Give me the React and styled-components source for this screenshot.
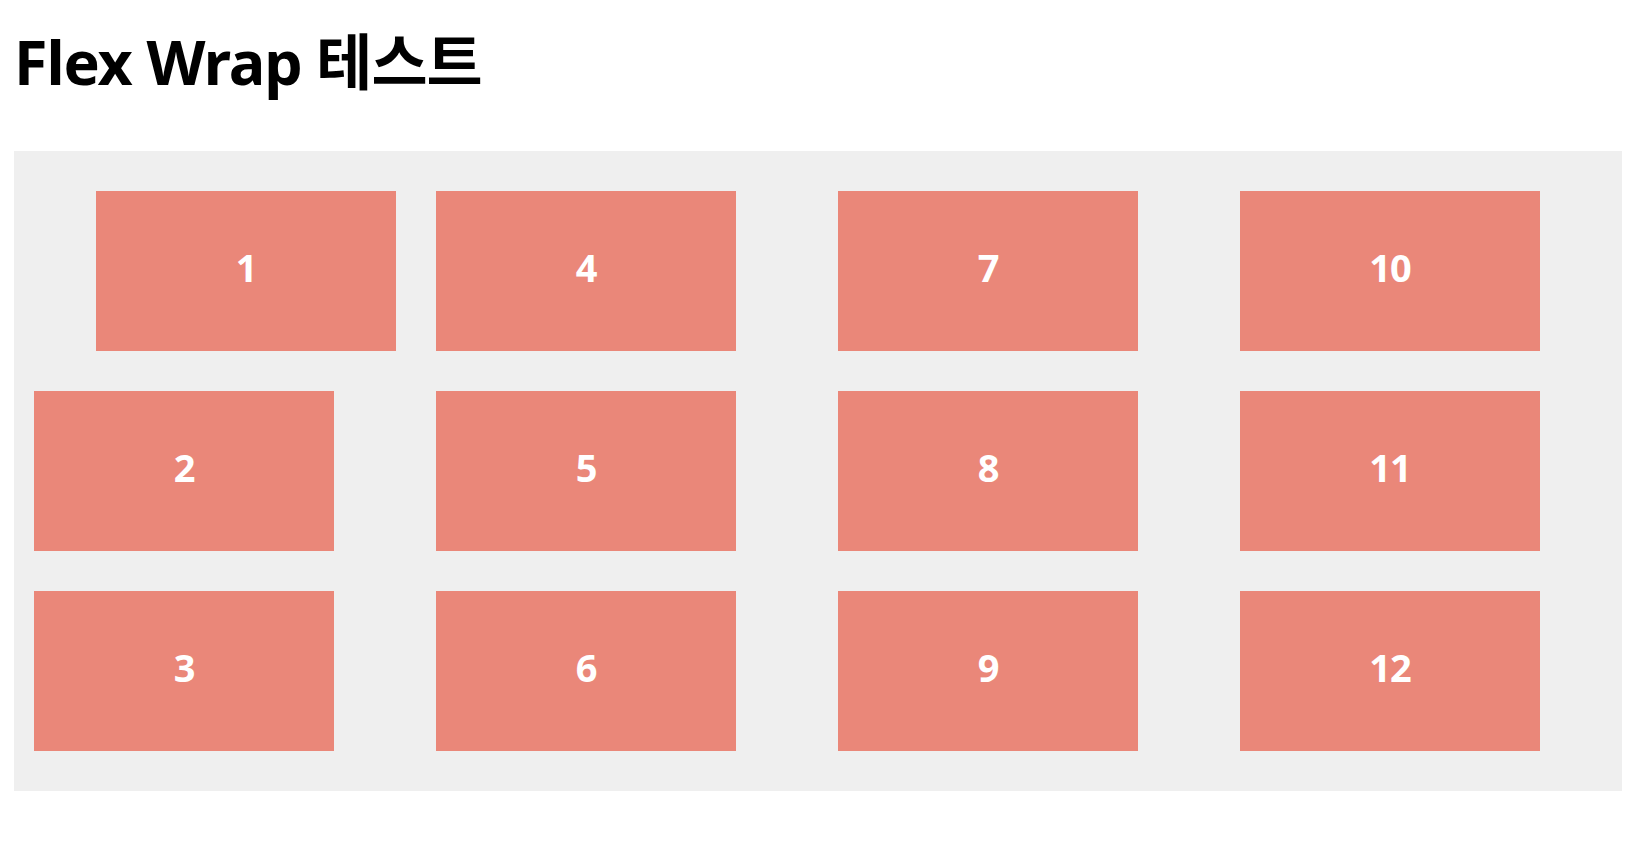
import React from "react";
import styled, { createGlobalStyle } from "styled-components";

const GlobalStyle = createGlobalStyle`
  html, body {
    margin: 0;
    padding: 0;
    background: #ffffff;
  }
  body {
    font-family: "Noto Sans", "Noto Sans CJK KR", sans-serif;
  }
`;

const Page = styled.div`
  padding: 18px 8px 0 14px;
`;

const Title = styled.h1`
  margin: 0 0 46px 0;
  font-size: 61px;
  line-height: 87px;
  font-weight: 700;
  letter-spacing: -1.1px;
  color: #000000;
  font-family: "Noto Sans", "Noto Sans CJK KR", sans-serif;
`;

const WrapBox = styled.div`
  display: flex;
  flex-direction: column;
  flex-wrap: wrap;
  align-items: flex-start;
  align-content: stretch;
  row-gap: 40px;
  column-gap: 40px;
  height: 560px;
  padding: 40px 20px;
  background: #efefef;
`;

const Item = styled.div`
  flex: 0 0 auto;
  box-sizing: border-box;
  width: 300px;
  height: 160px;
  padding-bottom: 9px;
  display: flex;
  align-items: center;
  justify-content: center;
  background: #ea8779;
  color: #ffffff;
  font-size: 38px;
  font-weight: 700;
  letter-spacing: -1px;
  font-family: "Noto Sans", "Noto Sans CJK KR", sans-serif;
  align-self: ${(p) => (p.$end ? "flex-end" : "auto")};
`;

const items = Array.from({ length: 12 }, (_, i) => i + 1);

export default function App() {
  return (
    <>
      <GlobalStyle />
      <Page>
        <Title>Flex Wrap 테스트</Title>
        <WrapBox>
          {items.map((n) => (
            <Item key={n} $end={n === 1}>
              {n}
            </Item>
          ))}
        </WrapBox>
      </Page>
    </>
  );
}
